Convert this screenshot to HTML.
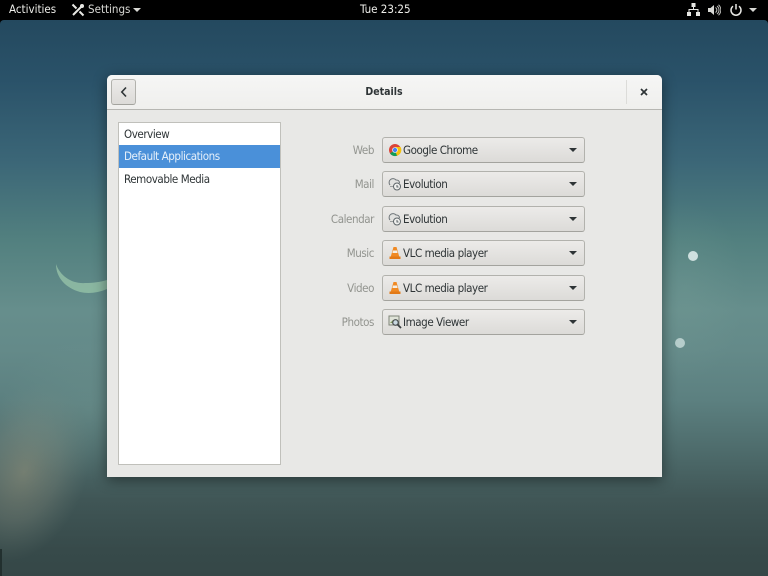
<!DOCTYPE html>
<html><head><meta charset="utf-8"><style>
html,body{margin:0;padding:0;width:768px;height:576px;overflow:hidden;background:#000}
*{box-sizing:border-box}
body{font-family:"DejaVu Sans Condensed","DejaVu Sans","Liberation Sans",sans-serif;font-stretch:condensed;font-size:11.500px;letter-spacing:-.43px;position:relative}
.a{position:absolute;white-space:nowrap}
#bg{position:absolute;left:0;top:20px;width:768px;height:556px;border-radius:4px 4px 0 0;overflow:hidden;
background:linear-gradient(180deg,#24495f 0,#2a5269 60px,#3b6677 140px,#52807f 220px,#668e8c 290px,#648a89 330px,#5c8080 380px,#4e6c6c 430px,#405656 480px,#374a4a 530px,#354747 556px)}
.top{color:#eeeeea;font-size:11.500px;letter-spacing:0;line-height:19px;top:0}
#win{position:absolute;left:107px;top:75px;width:555px;height:402px;background:#e8e8e6;border-radius:5px 5px 0 0;box-shadow:0 3px 14px rgba(0,0,0,.45)}
#hb{position:absolute;left:0;top:0;width:555px;height:35px;background:linear-gradient(#f6f6f5,#efefed);border-bottom:1px solid #b6b6b2;border-radius:5px 5px 0 0}
.btn{position:absolute;border:1px solid #b2b2ad;border-bottom-color:#a3a39e;border-radius:3px;background:linear-gradient(#ecebe9,#dcdbd8)}
#list{position:absolute;left:11px;top:47px;width:163px;height:343px;background:#fff;border:1px solid #c0c0bb}
.row{position:absolute;left:0;width:161px;height:22px;line-height:22px;padding-left:5px;color:#2e3436}
.lab{position:absolute;right:288px;width:80px;text-align:right;color:#92948f;line-height:26px;height:26px}
.cb{position:absolute;left:275px;width:203px;height:26px;line-height:24px;color:#2e3436}
.cb span{position:absolute;left:20px;top:0}
.cb svg{position:absolute;left:5px;top:5px}
.cb i{position:absolute;left:186px;top:10px;width:0;height:0;border:4px solid transparent;border-top:4px solid #2e3436;border-bottom:0}
</style></head><body>
<div id="bg">
<svg width="768" height="556" style="position:absolute;left:0;top:0">
<defs>
<radialGradient id="g1"><stop offset="0" stop-color="#a09a80" stop-opacity=".5"/><stop offset=".55" stop-color="#8f9484" stop-opacity=".28"/><stop offset="1" stop-color="#7a8a80" stop-opacity="0"/></radialGradient>
<radialGradient id="g2"><stop offset="0" stop-color="#7fa59b" stop-opacity=".22"/><stop offset="1" stop-color="#7fa59b" stop-opacity="0"/></radialGradient>
</defs>
<ellipse cx="24" cy="452" rx="62" ry="92" transform="rotate(20 24 452)" fill="url(#g1)"/>
<ellipse cx="90" cy="390" rx="90" ry="70" fill="url(#g2)"/>
<ellipse cx="685" cy="270" rx="60" ry="90" fill="url(#g2)"/>
<path d="M56 244C60 256 72 264 85 263C93 263 100 262 107 260L107 269C98 273 88 274 80 272C66 268 56 258 56 244Z" fill="#8fbba4" opacity=".9"/>
<circle cx="693" cy="236" r="5" fill="#cfe0df"/>
<circle cx="680" cy="323" r="5" fill="#b6cdcb"/>
<rect x="0" y="529" width="2" height="27" fill="#22302f"/>
</svg>
</div>
<div class="a top" style="left:9px">Activities</div>
<svg class="a" style="left:71px;top:3px" width="14" height="14" viewBox="0 0 14 14"><path d="M1.500 1.500L5.500 5.500M8.500 8.500L12.500 12.500M12 2L2 12" stroke="#e8e8e4" stroke-width="2" fill="none"/><circle cx="11" cy="3" r="2" fill="#e8e8e4"/></svg>
<div class="a top" style="left:88px;color:#d8d8d4">Settings</div>
<div class="a" style="left:133px;top:8px;width:0;height:0;border:4px solid transparent;border-top:4px solid #d8d8d4;border-bottom:0"></div>
<div class="a top" style="left:360px">Tue 23:25</div>
<svg class="a" style="left:687px;top:3px" width="13" height="13" viewBox="0 0 13 13"><path d="M4.500 0h4v4h-4zM0 9h4v4H0zM9 9h4v4H9z" fill="#e8e8e4"/><path d="M6.500 4v3M2 9V6.500h9V9" stroke="#e8e8e4" fill="none"/></svg>
<svg class="a" style="left:708px;top:4px" width="13" height="12" viewBox="0 0 13 12"><path d="M0 4h2.500L6 1v10L2.500 8H0z" fill="#d8d8d4"/><path d="M7.500 3.500a3 3 0 0 1 0 5M9 2a5 5 0 0 1 0 8M10.500 .8a7 7 0 0 1 0 10.400" stroke="#c0c0bc" fill="none"/></svg>
<svg class="a" style="left:729px;top:3px" width="14" height="14" viewBox="0 0 14 14"><path d="M4 3.200a5 5 0 1 0 6 0" stroke="#e8e8e4" stroke-width="1.500" fill="none"/><path d="M7 1v5.500" stroke="#e8e8e4" stroke-width="1.500"/></svg>
<div class="a" style="left:749px;top:8px;width:0;height:0;border:4px solid transparent;border-top:4px solid #d8d8d4;border-bottom:0"></div>

<div id="win">
<div id="hb">
<div class="btn" style="left:4px;top:4px;width:25px;height:26px"></div>
<svg style="position:absolute;left:12px;top:11px" width="10" height="12" viewBox="0 0 10 12"><path d="M7 1.500L2.800 6L7 10.500" stroke="#2e3436" stroke-width="1.600" fill="none"/></svg>
<div class="a" style="left:1px;width:552px;text-align:center;top:10px;font-weight:700;font-size:10.500px;letter-spacing:0;color:#2e3436;line-height:14px">Details</div>
<div class="a" style="left:519px;top:5px;width:1px;height:24px;background:#dcdcd9"></div>
<svg style="position:absolute;left:533px;top:13px" width="8" height="8" viewBox="0 0 8 8"><path d="M1 1L7 7M7 1L1 7" stroke="#2e3436" stroke-width="1.700"/></svg>
</div>
<div id="list">
<div class="row" style="top:0">Overview</div>
<div class="row" style="top:22px;background:#4a90d9;color:#e6f0fa;height:23px">Default Applications</div>
<div class="row" style="top:45px">Removable Media</div>
</div>

<div class="lab" style="top:62px;left:187px">Web</div>
<div class="btn cb" style="top:62px"><svg width="14" height="14" viewBox="0 0 14 14"><circle cx="7" cy="7" r="6" fill="#db4437"/><path d="M7 7L2 10.500A6 6 0 0 0 9 12.700z" fill="#0f9d58"/><path d="M7 4h5.600A6 6 0 0 1 9 12.700L7 7z" fill="#f4c20d"/><circle cx="7" cy="7" r="2.800" fill="#fff"/><circle cx="7" cy="7" r="2.200" fill="#4285f4"/></svg><span>Google Chrome</span><i></i></div>
<div class="lab" style="top:96px;left:187px">Mail</div>
<div class="btn cb" style="top:96px"><svg width="14" height="14" viewBox="0 0 14 14"><path d="M2 8a3.500 3.500 0 0 1 6-5a3 3 0 0 1 3.500 3" stroke="#70767a" fill="#e2e2e0"/><path d="M2 9.500h4" stroke="#9a9e9e"/><circle cx="9" cy="9.500" r="3.500" stroke="#5e6669" fill="#f0f0ee"/><path d="M9 8v2h1.500" stroke="#5e6669" fill="none"/></svg><span>Evolution</span><i></i></div>
<div class="lab" style="top:131px;left:187px">Calendar</div>
<div class="btn cb" style="top:131px"><svg width="14" height="14" viewBox="0 0 14 14"><path d="M2 8a3.500 3.500 0 0 1 6-5a3 3 0 0 1 3.500 3" stroke="#70767a" fill="#e2e2e0"/><path d="M2 9.500h4" stroke="#9a9e9e"/><circle cx="9" cy="9.500" r="3.500" stroke="#5e6669" fill="#f0f0ee"/><path d="M9 8v2h1.500" stroke="#5e6669" fill="none"/></svg><span>Evolution</span><i></i></div>
<div class="lab" style="top:165px;left:187px">Music</div>
<div class="btn cb" style="top:165px"><svg width="14" height="14" viewBox="0 0 14 14"><path d="M5.500 1h3l3 10.500H2.500z" fill="#f08a24"/><path d="M5 4.500h4l.6 2.500H4.400z" fill="#f4efe6"/><path d="M1.500 10.500h11V13h-11z" fill="#e27a18"/></svg><span>VLC media player</span><i></i></div>
<div class="lab" style="top:200px;left:187px">Video</div>
<div class="btn cb" style="top:200px"><svg width="14" height="14" viewBox="0 0 14 14"><path d="M5.500 1h3l3 10.500H2.500z" fill="#f08a24"/><path d="M5 4.500h4l.6 2.500H4.400z" fill="#f4efe6"/><path d="M1.500 10.500h11V13h-11z" fill="#e27a18"/></svg><span>VLC media player</span><i></i></div>
<div class="lab" style="top:234px;left:187px">Photos</div>
<div class="btn cb" style="top:234px"><svg width="14" height="14" viewBox="0 0 14 14"><rect x="1" y="1" width="10" height="9" fill="#dfe3d8" stroke="#7f8478"/><path d="M2 8l3-3 3 3z" fill="#7e9a5c"/><circle cx="7.500" cy="7.500" r="2.800" fill="#c9d8e0" stroke="#4a4f50" stroke-width="1.200"/><path d="M9.500 9.500L13 13" stroke="#3a3f40" stroke-width="1.800"/></svg><span>Image Viewer</span><i></i></div>
</div>
</body></html>
